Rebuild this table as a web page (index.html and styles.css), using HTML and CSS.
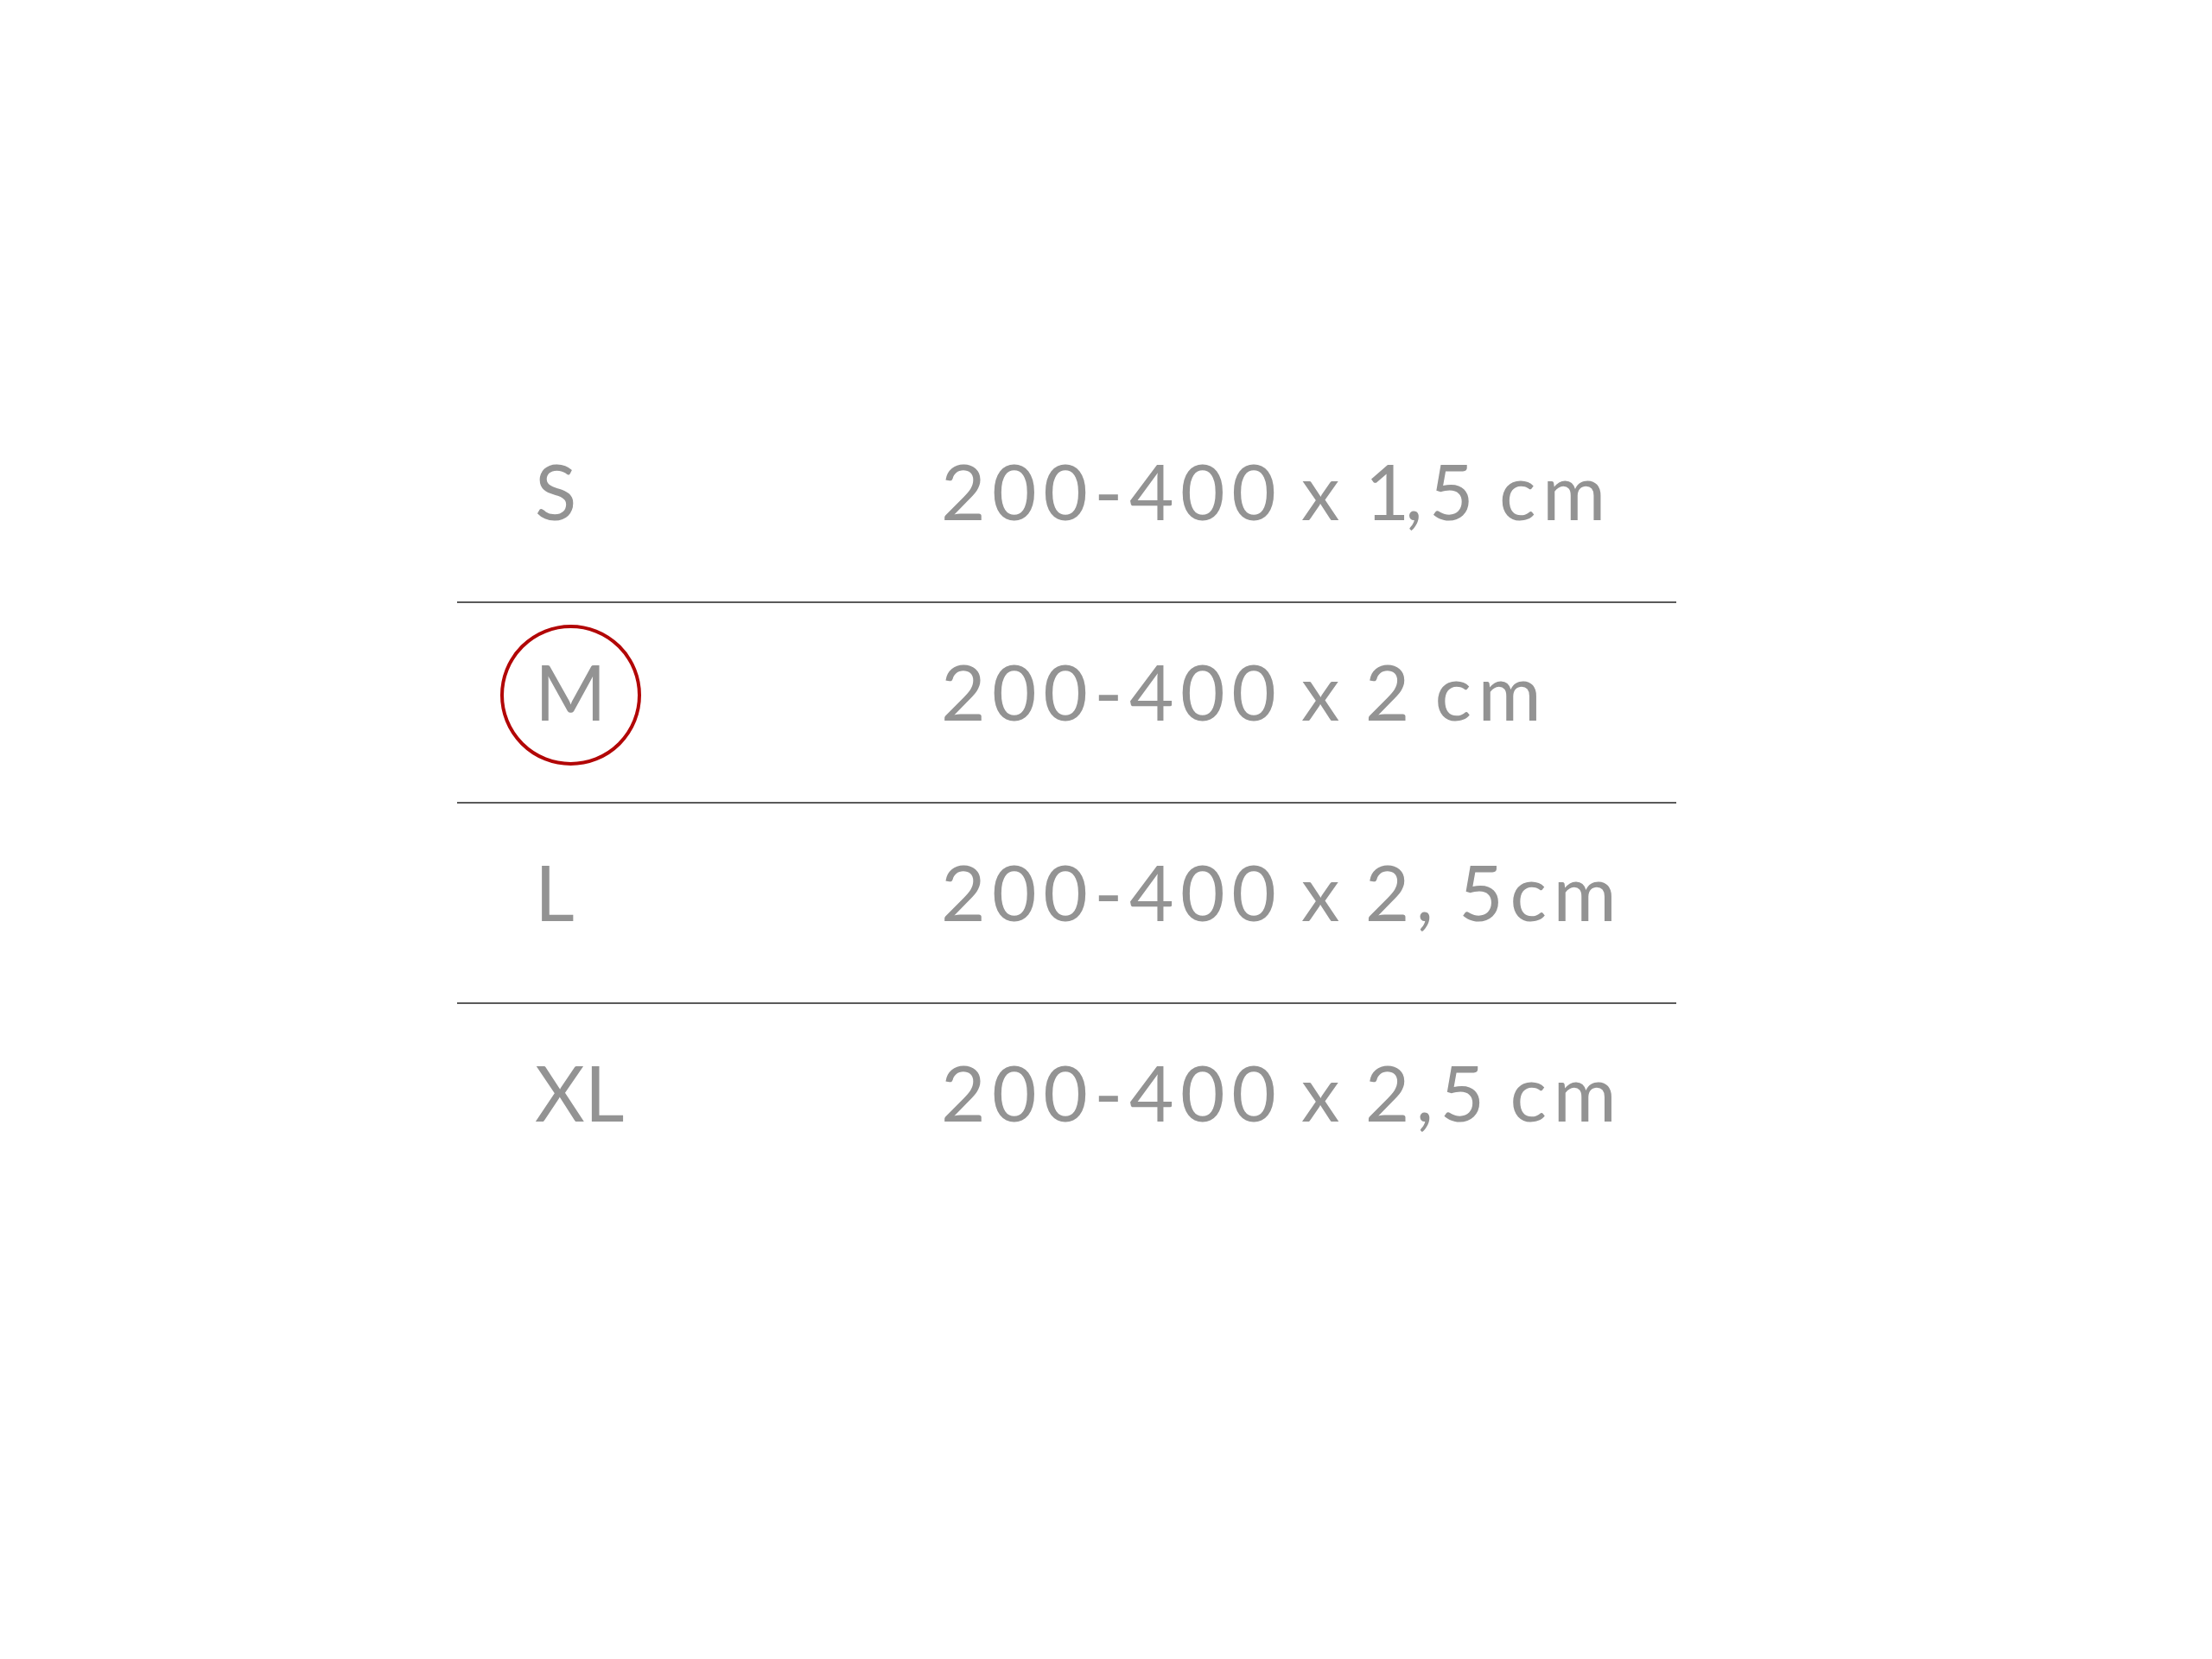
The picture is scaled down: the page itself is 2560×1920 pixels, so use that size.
FILE: index.html
```html
<!DOCTYPE html>
<html lang="pl">
<head>
<meta charset="utf-8">
<title>Rozmiary</title>
<link rel="stylesheet" href="styles.css">
</head>
<body>
<div class="sizes">
  <div class="row"><div class="size">S</div><div class="dim">200-400 x <span class="one">1</span>,5 cm</div></div>
  <div class="row"><div class="size"><span class="picked">M</span></div><div class="dim">200-400 x 2 cm</div></div>
  <div class="row"><div class="size">L</div><div class="dim">200-400 x 2, 5cm</div></div>
  <div class="row last"><div class="size">XL</div><div class="dim">200-400 x 2,5 cm</div></div>
</div>
</body>
</html>
```
FILE: styles.css
```css
html, body {
  margin: 0;
  padding: 0;
  background: #ffffff;
}
body {
  width: 2560px;
  height: 1920px;
  font-family: "Lato", "Open Sans", sans-serif;
  font-weight: 400;
  color: #939393;
}
.sizes {
  margin-left: 529px;
  padding-top: 466px;
  width: 1411px;
}
.row {
  box-sizing: border-box;
  height: 232px;
  display: grid;
  grid-template-columns: 560px 1fr;
  border-bottom: 2px solid #5a5a5a;
  font-size: 89px;
  line-height: 89px;
  padding-top: 57px;
}
.row.last {
  border-bottom: none;
}
.size {
  padding-left: 90px;
}
.dim {
  white-space: nowrap;
  letter-spacing: 7.5px;
  word-spacing: -8.5px;
}
.one {
  letter-spacing: -5px;
}
.picked {
  position: relative;
  display: inline-block;
}
.picked::before {
  content: "";
  position: absolute;
  left: 50%;
  top: 50%;
  width: 155px;
  height: 155px;
  margin-left: -81px;
  margin-top: -77px;
  border: 4px solid #b20606;
  border-radius: 50%;
}
```
